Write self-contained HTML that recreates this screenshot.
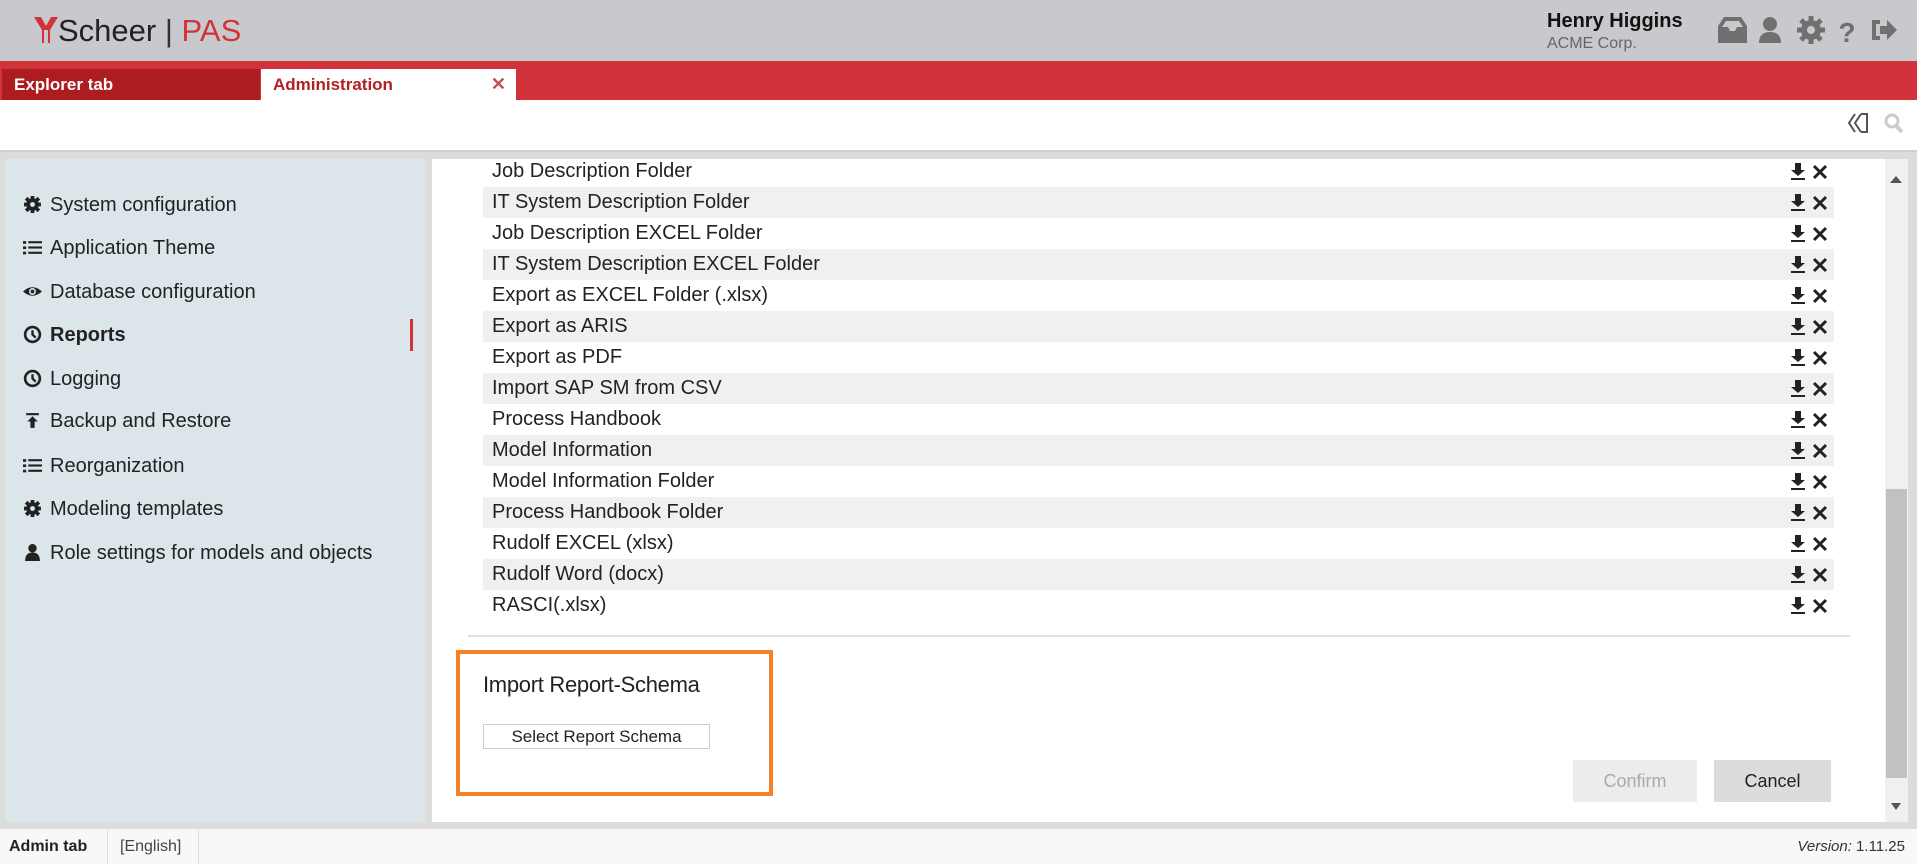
<!DOCTYPE html>
<html><head><meta charset="utf-8"><style>
*{box-sizing:border-box;margin:0;padding:0}
body{width:1917px;height:864px;overflow:hidden;background:#dcdcdc;font-family:"Liberation Sans",sans-serif;position:relative}
.abs{position:absolute}
#hdr{left:0;top:0;width:1917px;height:61px;background:#c8c9cc}
#red{left:0;top:61px;width:1917px;height:39px;background:#d2323a}
.tab{top:69px;height:31px;font-weight:bold;font-size:17px;line-height:31px;padding-left:12px}
#tb{left:0;top:100px;width:1917px;height:52px;background:#fff;border-bottom:2px solid #d0d0d0}
#side{left:5px;top:159px;width:420px;height:663px;background:#dce6ea}
.si{position:absolute;left:45px;font-size:20px;color:#222;height:30px;line-height:30px}
.ic{position:absolute;left:-27px;top:5px;width:19px;height:19px}
#main{left:432px;top:159px;width:1476px;height:663px;background:#fff;overflow:hidden}
.row{position:absolute;left:51px;width:1351px;height:31px;font-size:20px;line-height:31px;padding-left:9px;color:#222}
.row.g{background:#f0f0f0}
.ri{position:absolute;right:2px;top:7px}
#foot{left:0;top:829px;width:1917px;height:35px;background:#f8f8f8}
</style></head><body>
<div id="hdr" class="abs"></div>
<svg class="abs" style="left:34px;top:17px" width="24" height="26" viewBox="0 0 24 26"><path d="M0 0H7L12 9L17 0H24L16 13V26H8V13Z" fill="#d2323a"/><path d="M10 13H14V26H10Z" fill="#c8c9cc"/></svg>
<div class="abs" style="left:58px;top:13px;font-size:31px;color:#222">Scheer <span style="font-weight:normal;color:#333">|</span><span style="color:#d2323a"> PAS</span></div>
<div class="abs" style="left:1547px;top:10px;font-size:20px;font-weight:bold;color:#111">Henry Higgins</div>
<div class="abs" style="left:1547px;top:35px;font-size:16px;color:#666">ACME Corp.</div>
<svg class="abs" style="left:1715px;top:14px" width="190" height="32" viewBox="0 0 190 32">
<g fill="#707070">
<path d="M3 12 L9 3 H26 L32 12 V29 H3Z M7 13 H13 L15 17 H20 L22 13 H28 L24 7 H11Z" fill-rule="evenodd"/>
<circle cx="55" cy="10" r="7"/><path d="M44 29 Q44 18 55 18 Q66 18 66 29Z"/>
<circle cx="96" cy="16" r="10"/>
<g stroke="#707070" stroke-width="5"><path d="M96 2V30M82 16H110M86 6L106 26M106 6L86 26"/></g>
<circle cx="96" cy="16" r="4" fill="#c8c9cc"/>
<text x="132" y="28" font-size="28" font-weight="bold" font-family="Liberation Sans" fill="#707070" text-anchor="middle">?</text>
<path d="M157 6 H165 V10 H161 V22 H165 V26 H157Z M165 12 H172 V6 L182 16 L172 26 V20 H165Z"/>
</g></svg>
<div id="red" class="abs"></div>
<div class="abs tab" style="left:2px;width:258px;background:#ad1c1f;color:#fff">Explorer tab</div>
<div class="abs tab" style="left:261px;width:255px;background:#fff;color:#b02025">Administration<span style="position:absolute;right:10px;color:#c0504d;font-size:18px">✕</span></div>
<div id="tb" class="abs"></div>
<svg class="abs" style="left:1845px;top:111px" width="70" height="24"><path d="M10 3 L4 12 L10 21 M16 3 L10 12 L16 21" stroke="#555" stroke-width="2" fill="none"/><path d="M16 3 H22 V21 H16" stroke="#555" stroke-width="2" fill="none"/><circle cx="47" cy="10" r="6" stroke="#ccc" stroke-width="3" fill="none"/><path d="M51 15 L57 21" stroke="#ccc" stroke-width="4"/></svg>
<div id="side" class="abs">
<div class="si" style="top:31px"><svg class="ic" viewBox="0 0 18 18"><g stroke="#222" stroke-width="3.5"><path d="M9 1V17M1 9H17M3 3L15 15M15 3L3 15"/></g><circle cx="9" cy="9" r="6" fill="#222"/><circle cx="9" cy="9" r="2.3" fill="#dce6ea"/></svg>System configuration</div>
<div class="si" style="top:74px"><svg class="ic" viewBox="0 0 18 18" fill="#222"><rect x="0" y="3" width="3" height="2.5"/><rect x="5" y="3" width="13" height="2"/><rect x="0" y="8" width="3" height="2.5"/><rect x="5" y="8" width="13" height="2"/><rect x="0" y="13" width="3" height="2.5"/><rect x="5" y="13" width="13" height="2"/></svg>Application Theme</div>
<div class="si" style="top:118px"><svg class="ic" viewBox="0 0 18 18"><path d="M0 9 Q9 1 18 9 Q9 17 0 9Z" fill="#222"/><circle cx="9" cy="9" r="3.3" fill="#dce6ea"/><circle cx="9" cy="9" r="1.8" fill="#222"/></svg>Database configuration</div>
<div class="si" style="top:161px;font-weight:bold"><svg class="ic" viewBox="0 0 18 18"><circle cx="9" cy="9" r="7" stroke="#222" stroke-width="2.5" fill="none"/><path d="M9 5V9L12 12" stroke="#222" stroke-width="2.2" fill="none"/></svg>Reports</div>
<div class="abs" style="left:405px;top:160px;width:3px;height:32px;background:#d2323a"></div>
<div class="si" style="top:205px"><svg class="ic" viewBox="0 0 18 18"><circle cx="9" cy="9" r="7" stroke="#222" stroke-width="2.5" fill="none"/><path d="M9 5V9L12 12" stroke="#222" stroke-width="2.2" fill="none"/></svg>Logging</div>
<div class="si" style="top:247px"><svg class="ic" viewBox="0 0 18 18" fill="#222"><rect x="3" y="2" width="12" height="2"/><path d="M9 5 L14 10 H11 V16 H7 V10 H4Z"/></svg>Backup and Restore</div>
<div class="si" style="top:292px"><svg class="ic" viewBox="0 0 18 18" fill="#222"><rect x="0" y="3" width="3" height="2.5"/><rect x="5" y="3" width="13" height="2"/><rect x="0" y="8" width="3" height="2.5"/><rect x="5" y="8" width="13" height="2"/><rect x="0" y="13" width="3" height="2.5"/><rect x="5" y="13" width="13" height="2"/></svg>Reorganization</div>
<div class="si" style="top:335px"><svg class="ic" viewBox="0 0 18 18"><g stroke="#222" stroke-width="3.5"><path d="M9 1V17M1 9H17M3 3L15 15M15 3L3 15"/></g><circle cx="9" cy="9" r="6" fill="#222"/><circle cx="9" cy="9" r="2.3" fill="#dce6ea"/></svg>Modeling templates</div>
<div class="si" style="top:379px"><svg class="ic" viewBox="0 0 18 18" fill="#222"><circle cx="9" cy="5" r="4"/><path d="M2 17 Q2 9 9 9 Q16 9 16 17Z"/></svg>Role settings for models and objects</div>
</div>
<div id="main" class="abs">
<div id="rows"></div>
<div class="abs" style="left:36px;top:476px;width:1382px;height:2px;background:#e0e0e0"></div>
<div class="abs" style="left:24px;top:491px;width:317px;height:146px;border:4px solid #f58025"></div>
<div class="abs" style="left:51px;top:513px;font-size:22px;color:#222;letter-spacing:-0.3px">Import Report-Schema</div>
<div class="abs" style="left:51px;top:565px;width:227px;height:25px;border:1px solid #ccc;font-size:17px;line-height:23px;text-align:center;color:#222">Select Report Schema</div>
<div class="abs" style="left:1141px;top:601px;width:124px;height:42px;background:#ececec;color:#aaa;font-size:18px;line-height:42px;text-align:center">Confirm</div>
<div class="abs" style="left:1282px;top:601px;width:117px;height:42px;background:#dcdcdc;color:#222;font-size:18px;line-height:42px;text-align:center">Cancel</div>
<div class="abs" style="left:1453px;top:0;width:23px;height:663px;background:#f0f0f0"></div>
<div class="abs" style="left:1454px;top:330px;width:21px;height:289px;background:#c1c1c1"></div>
<div class="abs" style="left:1458px;top:17px;border:6px solid transparent;border-bottom:7px solid #555;border-top:0"></div>
<div class="abs" style="left:1459px;top:644px;border:5px solid transparent;border-top:7px solid #555;border-bottom:0"></div>
</div>
<div id="foot" class="abs">
<div class="abs" style="left:0;top:0;width:108px;height:35px;border-right:1px solid #ddd;font-size:16px;font-weight:bold;line-height:35px;padding-left:9px;color:#222">Admin tab</div>
<div class="abs" style="left:108px;top:0;width:91px;height:35px;border-right:1px solid #ddd;font-size:16px;line-height:35px;padding-left:12px;color:#444">[English]</div>
<div class="abs" style="right:12px;top:0;font-size:15px;line-height:35px;color:#333"><i>Version:</i> 1.11.25</div>
</div>
<script>
var n=["Job Description Folder","IT System Description Folder","Job Description EXCEL Folder","IT System Description EXCEL Folder","Export as EXCEL Folder (.xlsx)","Export as ARIS","Export as PDF","Import SAP SM from CSV","Process Handbook","Model Information","Model Information Folder","Process Handbook Folder","Rudolf EXCEL (xlsx)","Rudolf Word (docx)","RASCI(.xlsx)"];
var h="";var ic='<svg class="ri" width="42" height="18" viewBox="0 0 42 18"><path d="M5 0H11V7H15L8 13L1 7H5Z" fill="#222"/><rect x="1" y="15" width="14" height="2" fill="#222"/><path d="M24 3L36 15M36 3L24 15" stroke="#222" stroke-width="3"/></svg>';
for(var i=0;i<n.length;i++){h+='<div class="row'+(i%2?' g':'')+'" style="top:'+(-3+31*i)+'px">'+n[i]+ic+'</div>';}
document.getElementById("rows").innerHTML=h;
</script>
</body></html>
